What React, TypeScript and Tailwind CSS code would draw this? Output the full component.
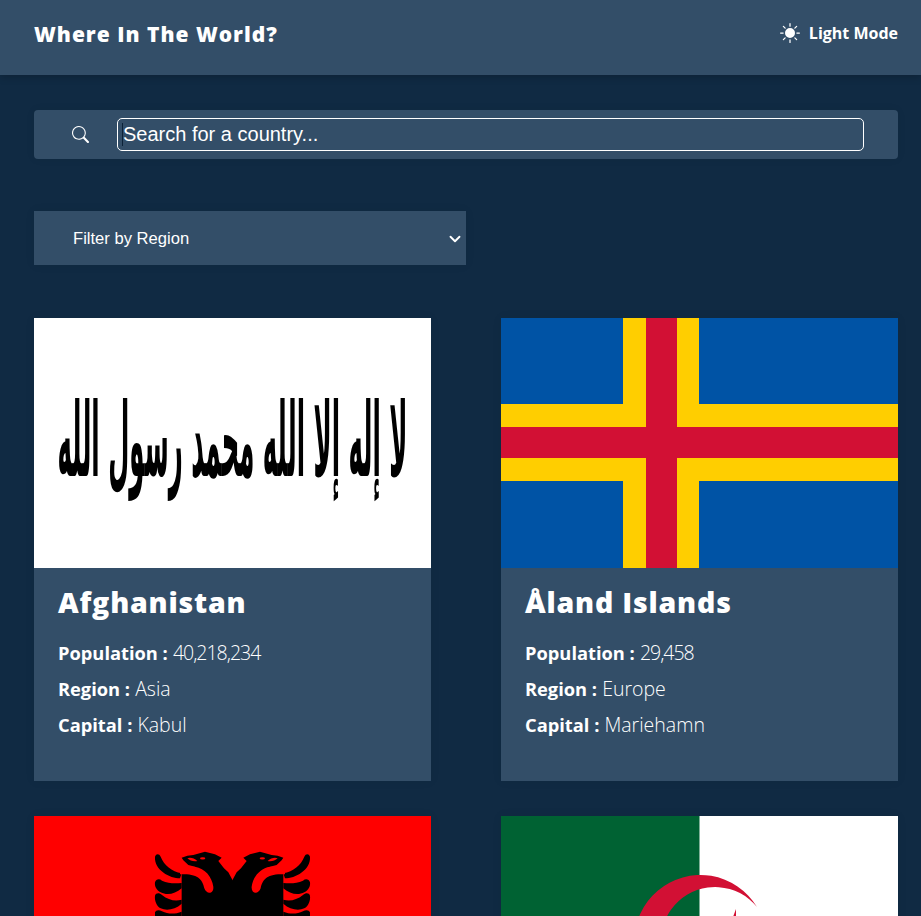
import { BsChevronDown, BsSearch, BsSunFill } from "react-icons/bs";

type Country = {
  name: string;
  population: string;
  region: string;
  capital: string;
  flag: React.ReactNode;
};

function AfghanistanFlag() {
  return (
    <div className="h-[250px] bg-white flex items-center justify-center overflow-hidden">
      <span
        lang="ar"
        dir="rtl"
        className="text-black font-bold whitespace-nowrap text-[24.4px] leading-none scale-y-[4.2] [font-family:'DejaVu_Sans',sans-serif]"
      >
        لا إله إلا الله محمد رسول الله
      </span>
    </div>
  );
}

function AlandFlag() {
  return (
    <svg viewBox="0 0 397 250" className="block w-full h-[250px]" preserveAspectRatio="none">
      <rect width="397" height="250" fill="#0053a5" />
      <rect x="122" width="76" height="250" fill="#ffce00" />
      <rect y="86" width="397" height="77" fill="#ffce00" />
      <rect x="145" width="31" height="250" fill="#d21034" />
      <rect y="109" width="397" height="31" fill="#d21034" />
    </svg>
  );
}

function EagleHalf() {
  return (
    <g>
      {/* wing feathers */}
      <path d="M15 35C18 25 28 25 32 35C42 60 65 80 95 85L90 100C60 100 12 75 15 35Z" />
      <path d="M15 112C18 102 28 100 36 107C55 116 75 116 95 114L95 130C75 148 50 152 32 142C20 136 13 124 15 112Z" />
      <path d="M15 152C18 143 28 143 36 150C55 165 75 170 95 164L95 176C75 194 50 198 32 190C20 184 13 166 15 152Z" />
      <path d="M15 202C18 194 28 194 36 199C55 208 75 208 95 200L95 260L15 260Z" />
      {/* head and body, runs past the middle so the two halves join */}
      <path d="M95 88L95 260L252 260L252 113L247.5 105L235 82L222 70L205 48L215 38L195 28L165 20L130 30L112 32L95 38L100 46L115 60L135 65Z" />
      {/* tongue, eye and mouth */}
      <path fill="#ff0000" d="M90 65L135 65C165 70 186 95 190 125C192 147 170 150 163 130C158 105 145 84 90 88Z" />
      <ellipse cx="158" cy="40" rx="8" ry="3.5" fill="#ff0000" />
      <path d="M112 40C122 36 132 40 142 48C130 50 120 47 112 40Z" fill="#ff0000" />
    </g>
  );
}

function AlbaniaFlag() {
  return (
    <svg viewBox="0 0 397 250" className="block w-full h-[250px]" preserveAspectRatio="none">
      <rect width="397" height="250" fill="#ff0000" />
      <g transform="translate(116 29) scale(0.3333)">
        <EagleHalf />
        <g transform="translate(495 0) scale(-1 1)">
          <EagleHalf />
        </g>
      </g>
    </svg>
  );
}

function AlgeriaFlag() {
  return (
    <svg viewBox="0 0 397 250" className="block w-full h-[250px]" preserveAspectRatio="none">
      <rect width="397" height="250" fill="#ffffff" />
      <rect width="198.5" height="250" fill="#006233" />
      <path fill="#d21034" d="M256 91A66 66 0 1 0 256 159A54 54 0 1 1 256 91Z" />
      <polygon fill="#d21034" points="201,125 226,133 235,157 235,131 261,125 235,119 235,93 226,117" />
    </svg>
  );
}

const countries: Country[] = [
  { name: "Afghanistan", population: "40,218,234", region: "Asia", capital: "Kabul", flag: <AfghanistanFlag /> },
  { name: "Åland Islands", population: "29,458", region: "Europe", capital: "Mariehamn", flag: <AlandFlag /> },
  { name: "Albania", population: "2,837,743", region: "Europe", capital: "Tirana", flag: <AlbaniaFlag /> },
  { name: "Algeria", population: "44,700,000", region: "Africa", capital: "Algiers", flag: <AlgeriaFlag /> },
];

function CountryCard({ country }: { country: Country }) {
  return (
    <div className="bg-[#334e68] shadow-[0_0_10px_rgba(0,0,0,0.06)]">
      {country.flag}
      <div className="h-[213px] pl-6 pt-[14px] text-white">
        <h2 className="text-[28.5px] leading-[41px] font-extrabold tracking-[0.8px]">{country.name}</h2>
        <div className="mt-[12px] text-[19.5px] leading-[36px] font-light">
          <p><b className="text-[18.3px] font-bold">Population :</b> <span className="tracking-[-1px]">{country.population}</span></p>
          <p><b className="text-[18.3px] font-bold">Region :</b> {country.region}</p>
          <p><b className="text-[18.3px] font-bold">Capital :</b> {country.capital}</p>
        </div>
      </div>
    </div>
  );
}

export default function App() {
  return (
    <div className="h-screen overflow-hidden bg-[#102a43] text-white [font-family:'Open_Sans',sans-serif]">
      {/* Header */}
      <header className="h-[75px] bg-[#334e68] pl-[34px] pr-[23px] pb-[6px] flex items-center justify-between shadow-[0_2px_8px_rgba(0,0,0,0.2)]">
        <h1 className="text-[21px] font-extrabold tracking-[1px]">Where In The World?</h1>
        <button className="flex items-center gap-[9px] pb-[3px] text-[16px] font-bold">
          <BsSunFill className="w-5 h-5" />
          Light Mode
        </button>
      </header>

      <main className="pl-[34px] pr-[23px]">
        {/* Search */}
        <div className="mt-[35px] h-[49px] rounded bg-[#334e68] flex items-center pl-[38px] pr-[34px] shadow-[0_0_10px_rgba(0,0,0,0.06)]">
          <BsSearch className="w-[17px] h-[17px] shrink-0" />
          <div className="relative ml-[28px] flex-1">
            <input
              placeholder="Search for a country..."
              className="w-full h-[33px] rounded-[5px] border border-white bg-transparent pl-[5px] text-[20px] text-white placeholder:text-white outline-none [font-family:'Liberation_Sans',sans-serif]"
            />
            <span className="absolute left-[5px] top-[5px] w-px h-[23px] bg-[#0b2238]" />
          </div>
        </div>

        {/* Filter */}
        <div className="relative mt-[52px] w-[432px]">
          <select className="block w-full h-[54px] pl-[39px] pr-1 pt-[2px] appearance-none bg-[#334e68] text-white text-[16.6px] shadow-[0_0_10px_rgba(0,0,0,0.06)] outline-none [font-family:'Liberation_Sans',sans-serif]">
            <option>Filter by Region</option>
            <option>Africa</option>
            <option>America</option>
            <option>Asia</option>
            <option>Europe</option>
            <option>Oceania</option>
          </select>
          <BsChevronDown className="absolute right-[5px] top-[22px] w-3 h-3 stroke-current stroke-[1.5] pointer-events-none" />
        </div>

        {/* Countries */}
        <div className="mt-[53px] grid grid-cols-2 gap-x-[70px] gap-y-[35px]">
          {countries.map((country) => (
            <CountryCard key={country.name} country={country} />
          ))}
        </div>
      </main>
    </div>
  );
}
